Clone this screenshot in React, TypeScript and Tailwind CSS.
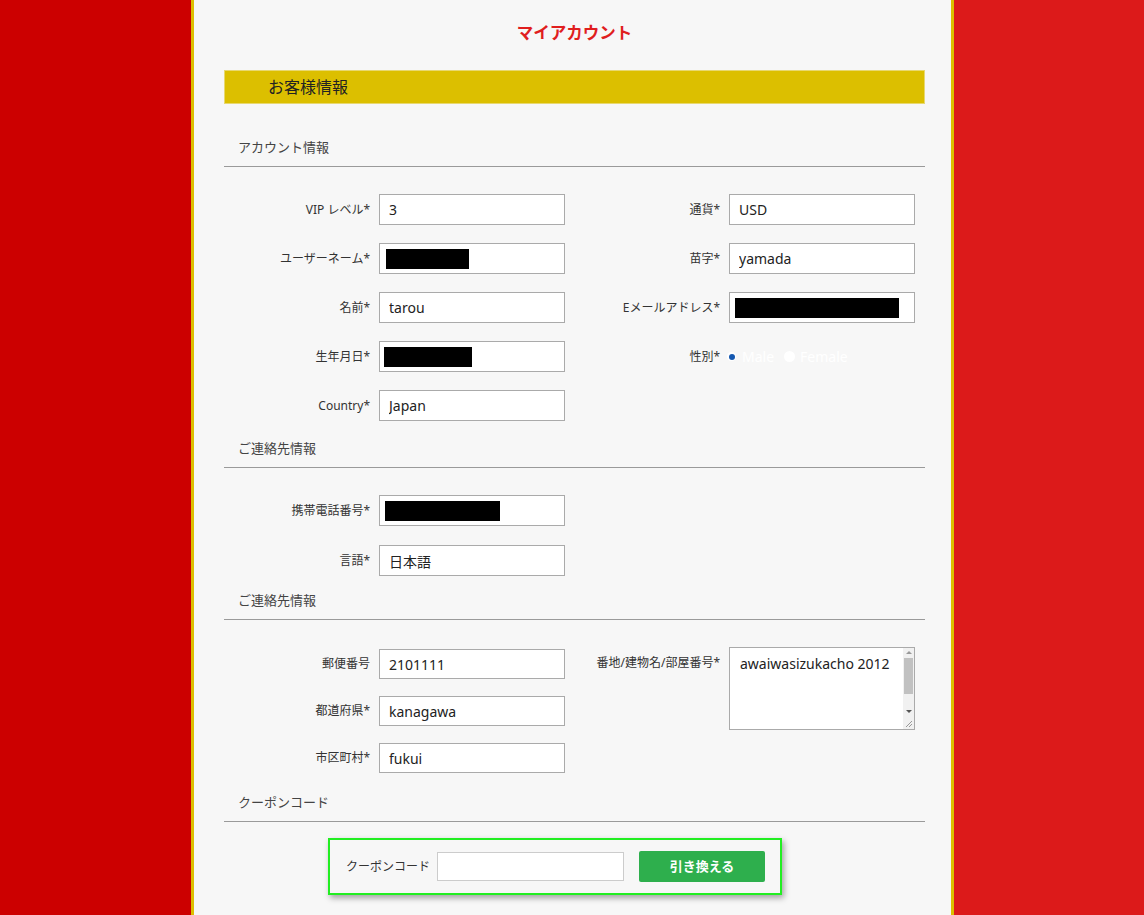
import type { ReactNode } from "react";

const FONT = "font-['Noto_Sans','Noto_Sans_CJK_JP',sans-serif]";

function Heading({ children, className = "" }: { children: ReactNode; className?: string }) {
  return (
    <div className={`border-b border-[#9a9a9a] pb-[9px] pl-[14px] text-[13px] leading-[20px] text-[#444] ${className}`}>
      {children}
    </div>
  );
}

function Label({ children }: { children: ReactNode }) {
  return (
    <div className="w-[155px] shrink-0 pr-[9px] text-right text-[12px] leading-[16px] text-[#333]">
      {children}
    </div>
  );
}

function Field({
  label,
  value,
  redact,
  h = 31,
}: {
  label: string;
  value?: string;
  redact?: { w: number; pl: number };
  h?: number;
}) {
  return (
    <div className="flex w-[341px] items-center">
      <Label>{label}</Label>
      {redact ? (
        <div
          className={`flex w-[186px] items-center border border-[#aaa] bg-white ${h === 31 ? "h-[31px]" : "h-[30px]"}`}
        >
          <div className="h-[20px] bg-black" style={{ width: redact.w, marginLeft: redact.pl }} />
        </div>
      ) : (
        <input
          readOnly
          defaultValue={value}
          className={`w-[186px] border border-[#aaa] bg-white px-[9px] text-[14px] text-[#222] outline-none ${h === 31 ? "h-[31px]" : "h-[30px]"}`}
        />
      )}
    </div>
  );
}

function Gender() {
  return (
    <div className="flex h-[31px] w-[341px] items-center">
      <Label>性別*</Label>
      <div className="flex items-center text-[14px] text-white">
        <span className="ml-[-2px] flex h-[9px] w-[9px] items-center justify-center rounded-full bg-white">
          <span className="h-[6px] w-[6px] rounded-full bg-[#1558b0]" />
        </span>
        <span className="ml-[6px]">Male</span>
        <span className="ml-[10px] h-[11px] w-[11px] rounded-full bg-white" />
        <span className="ml-[5px]">Female</span>
      </div>
    </div>
  );
}

function AddressArea() {
  return (
    <div className="flex w-[341px] items-start">
      <div className="w-[155px] shrink-0 pt-[8px] pr-[9px] text-right text-[12px] leading-[16px] text-[#333]">
        番地/建物名/部屋番号*
      </div>
      <div className="flex h-[83px] w-[187px] border border-[#aaa] bg-white">
        <div className="flex-1 pl-[10px] pt-[6px] text-[14px] leading-[20px] text-[#222]">
          awaiwasizukacho 2012
        </div>
        <div className="flex w-[11px] flex-col items-center bg-[#f1f1f1]">
          <span className="mt-[3px] h-0 w-0 border-x-[3px] border-b-[3px] border-x-transparent border-b-[#999]" />
          <span className="mt-[4px] h-[36px] w-[9px] bg-[#c1c1c1]" />
          <span className="flex-1" />
          <span className="mb-[6px] h-0 w-0 border-x-[3px] border-t-[3px] border-x-transparent border-t-[#555]" />
          <svg width="9" height="9" viewBox="0 0 9 9" className="mb-[1px]">
            <path d="M8 2 L2 8 M8 5 L5 8" stroke="#999" strokeWidth="1" />
          </svg>
        </div>
      </div>
    </div>
  );
}

export default function App() {
  return (
    <div className={`flex min-h-[915px] w-full bg-[#dc1a1a] ${FONT}`}>
      <div className="w-[191px] shrink-0 bg-[#cc0000]" />
      <div className="w-[763px] shrink-0 border-x-[3px] border-[#dcbf00] bg-[#f7f7f7] pl-[30px] pr-[26px]">
        <h1 className="pt-[22px] text-center text-[16.5px] font-bold leading-[22px] text-[#e01e1e]">
          マイアカウント
        </h1>

        <div className="mt-[26px] flex h-[34px] items-center border border-[#e8d870] bg-[#dcbf00] pl-[43px] text-[16px] text-[#222]">
          お客様情報
        </div>

        <Heading className="mt-[33px]">アカウント情報</Heading>
        <div className="mt-[27px] flex gap-[9px]">
          <div className="flex flex-col gap-[18px]">
            <Field label="VIP レベル*" value="3" />
            <Field label="ユーザーネーム*" redact={{ w: 83, pl: 6 }} />
            <Field label="名前*" value="tarou" />
            <Field label="生年月日*" redact={{ w: 88, pl: 4 }} />
            <Field label="Country*" value="Japan" />
          </div>
          <div className="flex flex-col gap-[18px]">
            <Field label="通貨*" value="USD" />
            <Field label="苗字*" value="yamada" />
            <Field label="Eメールアドレス*" redact={{ w: 164, pl: 5 }} />
            <Gender />
          </div>
        </div>

        <Heading className="mt-[17px]">ご連絡先情報</Heading>
        <div className="mt-[27px] flex flex-col gap-[19px]">
          <Field label="携帯電話番号*" redact={{ w: 115, pl: 5 }} />
          <Field label="言語*" value="日本語" />
        </div>

        <Heading className="mt-[14px]">ご連絡先情報</Heading>
        <div className="mt-[27px] flex gap-[9px]">
          <div className="mt-[2px] flex flex-col gap-[17px]">
            <Field label="郵便番号" value="2101111" h={30} />
            <Field label="都道府県*" value="kanagawa" h={30} />
            <Field label="市区町村*" value="fukui" h={30} />
          </div>
          <AddressArea />
        </div>

        <Heading className="mt-[19px]">クーポンコード</Heading>
        <div className="ml-[104px] mt-[16px] flex h-[57px] w-[454px] items-center border-2 border-[#22ee22] pl-[16px] shadow-[2px_3px_6px_rgba(0,0,0,0.35)]">
          <span className="text-[12px] text-[#333]">クーポンコード</span>
          <input className="ml-[7px] h-[29px] w-[187px] border border-[#ccc] bg-white outline-none" />
          <button className="ml-[15px] h-[31px] w-[126px] rounded-[2px] bg-[#2eaf4d] text-[13px] font-bold text-white">
            引き換える
          </button>
        </div>
      </div>
      <div className="flex-1" />
    </div>
  );
}
